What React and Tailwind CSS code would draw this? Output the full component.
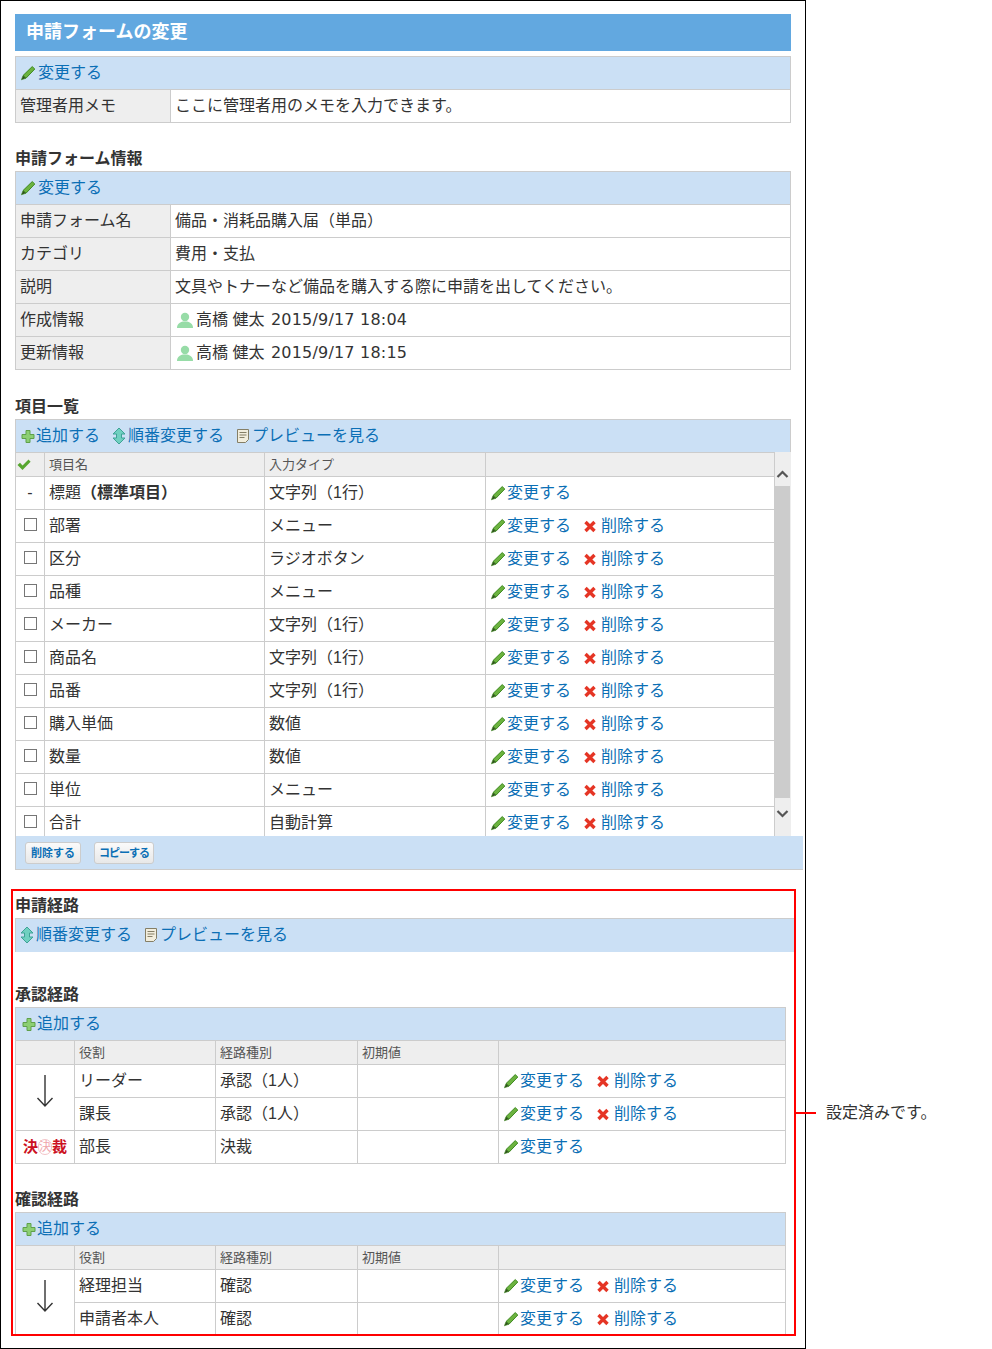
const FONT = "font-['Liberation_Sans','Noto_Sans_CJK_JP',sans-serif]";

const Pencil = () => (
  <svg width="16" height="16" viewBox="0 0 16 16" className="inline-block shrink-0 -ml-[1px] mr-[1px]">
    <path d="M12.200 1.600 14.800 4 6 13.200 3 10.600Z" fill="#6cb33f" stroke="#3f8a22" strokeWidth="1" />
    <path d="M3 10.600 1.400 14.800 6 13.200Z" fill="#2f4f1c" stroke="#3f8a22" strokeWidth="0.6" />
  </svg>
);
const Cross = () => (
  <svg width="16" height="16" viewBox="0 0 16 16" className="inline-block shrink-0 -ml-[1px] mr-[1px]">
    <path d="M2.500 4 11.500 13M11.500 4 2.500 13" stroke="#e53525" strokeWidth="3.400" />
  </svg>
);
const Plus = () => (
  <svg width="16" height="16" viewBox="0 0 16 16" className="inline-block shrink-0">
    <path d="M6 2.500h4v4h4v4h-4v4H6v-4H2v-4h4Z" fill="#8ccf73" stroke="#5fa04a" strokeWidth="1" />
  </svg>
);
const UpDown = () => (
  <svg width="14" height="18" viewBox="0 0 14 18" className="inline-block shrink-0">
    <path d="M7 1 13 7H9.500V11H13L7 17 1 11H4.500V7H1Z" fill="#6fd0c0" stroke="#3fa296" strokeWidth="1" />
  </svg>
);
const Doc = () => (
  <svg width="14" height="16" viewBox="0 0 14 16" className="inline-block shrink-0">
    <path d="M1.500 1.500h11v10l-3 3h-8Z" fill="#f2eedd" stroke="#857f66" />
    <path d="M3.500 4.500h7M3.500 7h7M3.500 9.500h5" stroke="#857f66" />
  </svg>
);
const Check = () => (
  <svg width="16" height="14" viewBox="0 0 16 14" className="inline-block">
    <path d="M1.500 7 4 4.800 6.500 7.400 12.500 1.600 14.600 3.800 6.500 12Z" fill="#57a62f" />
  </svg>
);
const User = () => (
  <svg width="18" height="18" viewBox="0 0 18 18" className="inline-block shrink-0">
    <circle cx="9" cy="6" r="4.200" fill="#97dca7" />
    <path d="M1 17c0-4 3-5.600 6-6.400h4c3 .8 6 2.400 6 6.400Z" fill="#97dca7" />
  </svg>
);
const Arrow = ({ className = '' }) => (
  <svg width="18" height="34" viewBox="0 0 18 34" className={`mx-auto block ${className}`}>
    <path d="M9 1v31M1.500 24 9 32l7.500-8" fill="none" stroke="#333" strokeWidth="1.400" />
  </svg>
);

const A = ({ children, className = '' }) => (
  <a className={`text-[#0b6fb5] text-[16px] whitespace-nowrap ${className}`}>{children}</a>
);
const Edit = ({ className = '' }) => (
  <span className={`inline-flex items-center ${className}`}><Pencil /><A>変更する</A></span>
);
const Delete = () => (
  <span className="inline-flex items-center gap-[1px]"><Cross /><A>削除する</A></span>
);
const Actions = ({ del = true, className = '' }) => (
  <div className={`flex items-center gap-[13px] ${className}`}>
    <Edit />
    {del && <Delete />}
  </div>
);

const Toolbar = ({ children, className = '' }) => (
  <div className={`h-[33px] bg-[#cbe0f5] border border-[#ccc] border-b-0 flex items-center pl-[4px] ${className}`}>
    {children}
  </div>
);
const Heading = ({ children, className = '' }) => (
  <h3 className={`text-[16px] leading-[20px] font-bold text-[#333] ${className}`}>{children}</h3>
);

const KV = ({ rows, width }) => (
  <table className="table-fixed border-collapse text-[16px] text-[#333]" style={{ width }}>
    <colgroup>
      <col className="w-[155px]" />
      <col />
    </colgroup>
    <tbody>
      {rows.map(([k, v]) => (
        <tr key={k} className="h-[33px]">
          <td className="border border-[#ccc] bg-[#eee] pl-[4px] py-0">{k}</td>
          <td className="border border-[#ccc] pl-[4px] py-0">{v}</td>
        </tr>
      ))}
    </tbody>
  </table>
);

const Person = ({ time }) => (
  <span className="flex items-center gap-[2px] pl-[1px]">
    <User />
    <span>高橋 健太 <span className="font-['DejaVu_Sans',sans-serif] text-[16px] ml-[2px] tracking-[0.2px]">{time}</span></span>
  </span>
);

const ITEMS = [
  ['部署', 'メニュー'],
  ['区分', 'ラジオボタン'],
  ['品種', 'メニュー'],
  ['メーカー', '文字列（1行）'],
  ['商品名', '文字列（1行）'],
  ['品番', '文字列（1行）'],
  ['購入単価', '数値'],
  ['数量', '数値'],
  ['単位', 'メニュー'],
  ['合計', '自動計算'],
];

const td = 'border border-[#ccc] pl-[4px] py-0';
const th = 'border border-[#ccc] bg-[#eee] pl-[4px] py-0 text-[13px] leading-[20px] font-normal text-left text-[#555] h-[24px]';

const RouteTable = ({ rows }) => (
  <table className="w-[771px] table-fixed border-collapse text-[16px] text-[#333]">
    <colgroup>
      <col className="w-[59px]" />
      <col className="w-[141px]" />
      <col className="w-[142px]" />
      <col className="w-[141px]" />
      <col />
    </colgroup>
    <thead>
      <tr>
        <th className={th}></th>
        <th className={th}>役割</th>
        <th className={th}>経路種別</th>
        <th className={th}>初期値</th>
        <th className={th}></th>
      </tr>
    </thead>
    <tbody>
      {rows.map((r) => (
        <tr key={r.role} className="h-[33px]">
          {r.first && <td rowSpan={r.span} className="border border-[#ccc] p-0">{r.first}</td>}
          <td className={td}>{r.role}</td>
          <td className={td}>{r.kind}</td>
          <td className={td}></td>
          <td className={td}><Actions del={r.del !== false} className="pl-[1px]" /></td>
        </tr>
      ))}
    </tbody>
  </table>
);

const Stamp = () => (
  <div className="flex justify-center text-[15px] font-bold text-[#cc1122] leading-none">
    <span>決</span>
    <span className="w-[14px] h-[16px] rounded-full border border-[#f3c4c8] text-[12px] font-normal text-[#f0a5ab] text-center leading-[15px]">決</span>
    <span>裁</span>
  </div>
);

export default function App() {
  return (
    <div className={`${FONT} relative w-[992px] h-[1349px] bg-white text-[#333]`}>
      <div className="w-[806px] h-[1349px] border border-black pt-[13px] pl-[14px]">
        <div className="w-[776px] h-[37px] bg-[#62a8e0] text-white font-bold text-[18px] pl-[11px] flex items-center">
          申請フォームの変更
        </div>

        <Toolbar className="w-[776px] mt-[5px]"><Edit className="gap-[1px] ml-[1px]" /></Toolbar>
        <KV width={776} rows={[['管理者用メモ', 'ここに管理者用のメモを入力できます。']]} />

        <Heading className="mt-[26px] mb-[2px]">申請フォーム情報</Heading>
        <Toolbar className="w-[776px]"><Edit className="gap-[1px] ml-[1px]" /></Toolbar>
        <KV
          width={776}
          rows={[
            ['申請フォーム名', '備品・消耗品購入届（単品）'],
            ['カテゴリ', '費用・支払'],
            ['説明', '文具やトナーなど備品を購入する際に申請を出してください。'],
            ['作成情報', <Person time="2015/9/17 18:04" />],
            ['更新情報', <Person time="2015/9/17 18:15" />],
          ]}
        />

        <Heading className="mt-[27px] mb-[2px]">項目一覧</Heading>
        <Toolbar className="w-[776px] gap-[12px]">
          <span className="inline-flex items-center"><Plus /><A>追加する</A></span>
          <span className="inline-flex items-center gap-[2px]"><UpDown /><A>順番変更する</A></span>
          <span className="inline-flex items-center gap-[2px]"><Doc /><A>プレビューを見る</A></span>
        </Toolbar>
        <div className="w-[776px] h-[384px] flex overflow-hidden">
          <table className="w-[760px] h-fit table-fixed border-collapse text-[16px] text-[#333]">
            <colgroup>
              <col className="w-[29px]" />
              <col className="w-[220px]" />
              <col className="w-[221px]" />
              <col />
            </colgroup>
            <thead>
              <tr>
                <th className={`${th} !pl-0 text-center`}><Check /></th>
                <th className={th}>項目名</th>
                <th className={th}>入力タイプ</th>
                <th className={th}></th>
              </tr>
            </thead>
            <tbody>
              <tr className="h-[33px]">
                <td className="border border-[#ccc] text-center">-</td>
                <td className={td}>標題<b>（標準項目）</b></td>
                <td className={td}>文字列（1行）</td>
                <td className={td}><Actions del={false} className="pl-[1px]" /></td>
              </tr>
              {ITEMS.map(([name, type]) => (
                <tr key={name} className="h-[33px]">
                  <td className="border border-[#ccc] p-0">
                    <div className="w-[13px] h-[13px] border border-[#767676] ml-[8px] -mt-[3px]" />
                  </td>
                  <td className={td}>{name}</td>
                  <td className={td}>{type}</td>
                  <td className={td}><Actions className="pl-[1px]" /></td>
                </tr>
              ))}
            </tbody>
          </table>
          <div className="w-[16px] bg-[#eee] flex flex-col items-start">
            <svg width="15" height="34" viewBox="0 0 15 34" className="shrink-0">
              <path d="M2.500 25 7.500 20l5 5" fill="none" stroke="#555" strokeWidth="2.200" />
            </svg>
            <div className="w-[15px] h-[312px] bg-[#ccc] shrink-0" />
            <svg width="15" height="34" viewBox="0 0 15 34" className="shrink-0">
              <path d="M2.500 13l5 5 5-5" fill="none" stroke="#555" strokeWidth="2.200" />
            </svg>
          </div>
        </div>
        <div className="w-[788px] h-[34px] bg-[#cbe0f5] border-b border-l border-[#ccc] flex items-center gap-[13px] pl-[9px] pt-[1px]">
          <button className="h-[22px] px-[5px] rounded-[3px] border border-[#ccc] bg-gradient-to-b from-[#fafafa] to-[#e8e8e8] text-[11px] font-bold text-[#0b6fb5] whitespace-nowrap">
            削除する
          </button>
          <button className="h-[22px] px-[4px] rounded-[3px] border border-[#ccc] bg-gradient-to-b from-[#fafafa] to-[#e8e8e8] text-[11px] font-bold text-[#0b6fb5] whitespace-nowrap tracking-[-1px]">
            コピーする
          </button>
        </div>

        <div className="w-[785px] h-[447px] -ml-[4px] mt-[19px] border-2 border-[#f00] pl-[2px] pt-[5px] overflow-hidden">
          <Heading className="mb-[2px]">申請経路</Heading>
          <Toolbar className="w-[780px] h-[34px] border-b pb-[2px] gap-[12px]">
            <span className="inline-flex items-center gap-[2px]"><UpDown /><A>順番変更する</A></span>
            <span className="inline-flex items-center gap-[2px]"><Doc /><A>プレビューを見る</A></span>
          </Toolbar>

          <Heading className="mt-[33px] mb-[2px]">承認経路</Heading>
          <Toolbar className="w-[771px]">
            <span className="inline-flex items-center pl-[1px]"><Plus /><A>追加する</A></span>
          </Toolbar>
          <RouteTable
            rows={[
              { role: 'リーダー', kind: '承認（1人）', first: <Arrow className="-mt-[14px]" />, span: 2 },
              { role: '課長', kind: '承認（1人）' },
              { role: '部長', kind: '決裁', first: <Stamp />, span: 1, del: false },
            ]}
          />

          <Heading className="mt-[26px] mb-[2px]">確認経路</Heading>
          <Toolbar className="w-[771px]">
            <span className="inline-flex items-center pl-[1px]"><Plus /><A>追加する</A></span>
          </Toolbar>
          <RouteTable
            rows={[
              { role: '経理担当', kind: '確認', first: <Arrow className="-mt-[13px]" />, span: 2 },
              { role: '申請者本人', kind: '確認' },
            ]}
          />
        </div>
      </div>

      <div className="absolute left-[796px] top-[1112px] w-[20px] h-[2px] bg-[#f00]" />
      <div className="absolute left-[826px] top-[1103px] text-[16px] leading-[20px] text-[#333]">設定済みです。</div>
    </div>
  );
}
